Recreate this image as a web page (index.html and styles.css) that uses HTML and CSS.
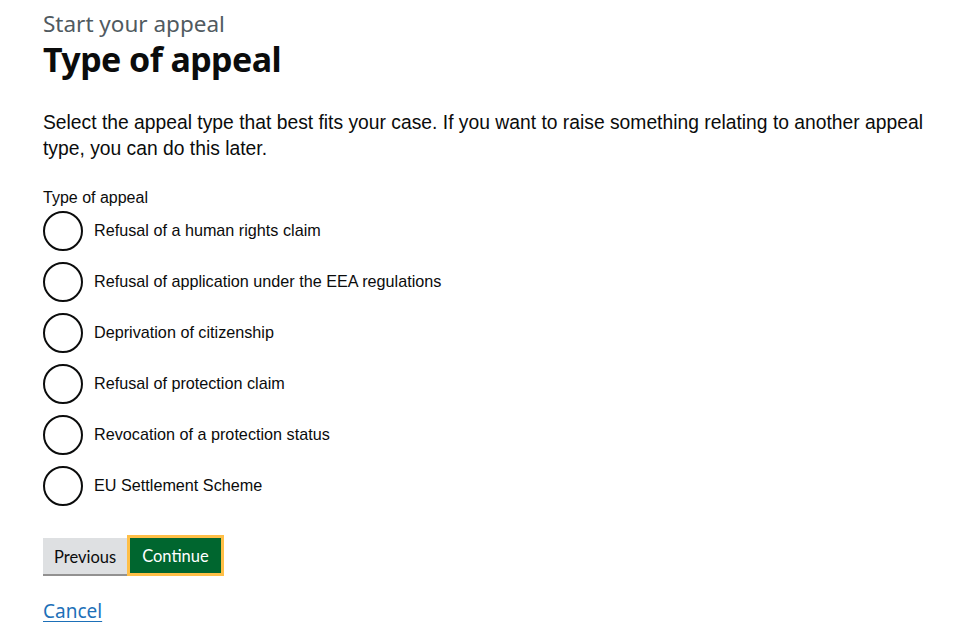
FILE: index.html
```html
<!DOCTYPE html>
<html lang="en">
<head>
  <meta charset="UTF-8" />
  <title>Type of appeal</title>
  <link rel="stylesheet" href="styles.css">
</head>
<body>
  <main class="page">
    <span class="caption">Start your appeal</span>
    <h1 class="heading">Type of appeal</h1>

    <p class="intro">Select the appeal type that best fits your case. If you want to raise something relating to another appeal type, you can do this later.</p>

    <!-- appeal type choices -->
    <fieldset class="choices">
      <legend class="choices-legend">Type of appeal</legend>
      <div class="radio-list">
        <label class="radio"><input type="radio" name="appealType" value="protection" /><span>Refusal of a human rights claim</span></label>
        <label class="radio"><input type="radio" name="appealType" value="eea" /><span>Refusal of application under the EEA regulations</span></label>
        <label class="radio"><input type="radio" name="appealType" value="deprivation" /><span>Deprivation of citizenship</span></label>
        <label class="radio"><input type="radio" name="appealType" value="refusal" /><span>Refusal of protection claim</span></label>
        <label class="radio"><input type="radio" name="appealType" value="revocation" /><span>Revocation of a protection status</span></label>
        <label class="radio"><input type="radio" name="appealType" value="eu" /><span>EU Settlement Scheme</span></label>
      </div>
    </fieldset>

    <div class="actions">
      <button type="button" class="btn btn-secondary">Previous</button>
      <button type="submit" class="btn btn-primary">Continue</button>
    </div>

    <a href="#" class="cancel">Cancel</a>
  </main>
</body>
</html>
```

FILE: styles.css
```css
body {
  margin: 0;
  background: #fff;
  color: #0b0c0c;
  font-family: "Liberation Sans", Arial, sans-serif;
}
.page {
  padding: 9px 30px 0 43px;
}
.caption {
  display: block;
  font-family: "Noto Sans", sans-serif;
  font-size: 22.5px;
  line-height: 30px;
  color: #505a5f;
}
.heading {
  margin: 0 0 31px;
  font-family: "Noto Sans", sans-serif;
  font-size: 34px;
  line-height: 40px;
  font-weight: 700;
  letter-spacing: -0.6px;
}
.intro {
  margin: 0 0 26px;
  font-size: 19.3px;
  line-height: 26px;
}
.choices {
  margin: 0;
  padding: 0;
  border: none;
}
.choices-legend {
  padding: 0;
  font-size: 16px;
  line-height: 20px;
}
.radio-list {
  margin-top: -3px;
}
.radio {
  display: flex;
  align-items: center;
  gap: 11px;
  height: 51px;
  font-size: 16.2px;
}
.radio input {
  appearance: none;
  margin: 0;
  width: 40px;
  height: 40px;
  border: 2px solid #0b0c0c;
  border-radius: 50%;
  box-sizing: border-box;
}
.actions {
  display: flex;
  align-items: center;
  margin-top: 24px;
}
.btn {
  font-family: Lato, sans-serif;
  font-size: 16.5px;
  line-height: 20px;
  border: none;
  cursor: pointer;
}
.btn-secondary {
  background: #dee0e2;
  color: #0b0c0c;
  padding: 9px 11px 7px;
  box-shadow: 0 2px 0 #929191;
}
.btn-primary {
  background: #00662f;
  color: #fff;
  padding: 8px 12px 7px;
  border: 3px solid #ffbf47;
}
.cancel {
  display: inline-block;
  margin-top: 22px;
  font-family: "Noto Sans", sans-serif;
  font-size: 19px;
  color: #1d70b8;
  text-underline-offset: 3px;
}
```
